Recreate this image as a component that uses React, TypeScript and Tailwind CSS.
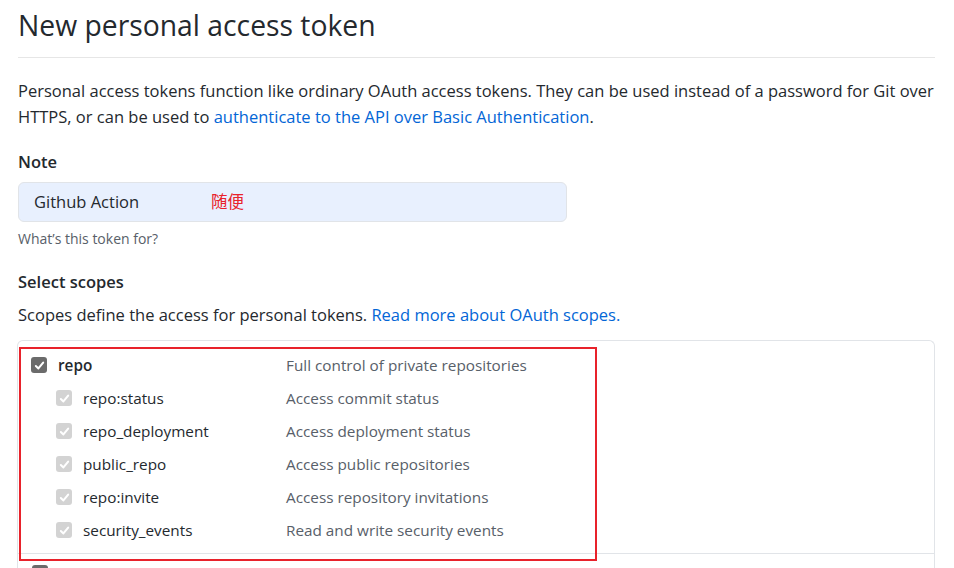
import React from 'react';

const subScopes = [
  { name: 'repo:status', desc: 'Access commit status' },
  { name: 'repo_deployment', desc: 'Access deployment status' },
  { name: 'public_repo', desc: 'Access public repositories' },
  { name: 'repo:invite', desc: 'Access repository invitations' },
  { name: 'security_events', desc: 'Read and write security events' },
];

function Check({ light }: { light?: boolean }) {
  return (
    <span
      className={
        'flex h-[16px] w-[16px] items-center justify-center rounded-[3px] ' +
        (light ? 'bg-[#d3d3d3]' : 'bg-[#6b6b6b]')
      }
    >
      <svg width="11" height="11" viewBox="0 0 12 12" fill="none">
        <path d="M2 6.5 L4.8 9.2 L10 2.8" stroke="white" strokeWidth="2.2" strokeLinecap="round" strokeLinejoin="round" />
      </svg>
    </span>
  );
}

function App() {
  return (
    <div className="h-[568px] w-[954px] overflow-hidden bg-white px-[18px] font-['Open_Sans','Noto_Sans_CJK_SC',sans-serif] text-[#24292e]">
      <h1 className="pt-[5px] pb-[12px] text-[28.3px] leading-[40px] font-normal">New personal access token</h1>
      <div className="mr-[1px] border-b border-[#e6e6e6]" />

      <p className="mt-[20px] text-[16.5px] leading-[26px]">
        Personal access tokens function like ordinary OAuth access tokens. They can be used instead of a password for Git over HTTPS, or can be used to{' '}
        <span className="text-[#0366d6]">authenticate to the API over Basic Authentication</span>.
      </p>

      <div className="mt-[20px] text-[16.5px] leading-[24px] font-semibold">Note</div>
      <div className="mt-[8px] flex h-[40px] w-[549px] items-center rounded-[6px] border border-[#e1e4e8] bg-[#e8f0fe] pl-[15px] text-[16.5px]">
        <span className="w-[177px]">Github Action</span>
        <span className="text-[#e8222b]">随便</span>
      </div>
      <div className="mt-[7px] text-[14px] leading-[20px] text-[#586069]">What’s this token for?</div>

      <div className="mt-[21px] text-[16.5px] leading-[24px] font-semibold">Select scopes</div>
      <p className="mt-[9px] text-[16.5px] leading-[24px]">
        Scopes define the access for personal tokens. <span className="text-[#0366d6]">Read more about OAuth scopes.</span>
      </p>

      <div className="relative mt-[13px] -ml-[1px] mr-[1px] rounded-t-[6px] border border-b-0 border-[#e1e4e8]">
        <div className="pt-[14px] pb-[13px] pl-[13px] text-[15.3px] leading-[20px]">
          <div className="flex items-center">
            <Check />
            <span className="ml-[11px] w-[228px] font-semibold">repo</span>
            <span className="text-[#586069]">Full control of private repositories</span>
          </div>
          {subScopes.map((s) => (
            <div key={s.name} className="mt-[13px] flex items-center pl-[25px]">
              <Check light />
              <span className="ml-[11px] w-[203px]">{s.name}</span>
              <span className="text-[#586069]">{s.desc}</span>
            </div>
          ))}
        </div>
        <div className="h-[20px] border-t border-[#e1e4e8] pl-[14px] pt-[11px]">
          <span className="block h-[16px] w-[16px] rounded-[3px] bg-[#6b6b6b]" />
        </div>
        <div className="pointer-events-none absolute top-[6px] left-[1px] h-[214px] w-[578px] border-2 border-[#e8222b]" />
      </div>
    </div>
  );
}

export default App;
